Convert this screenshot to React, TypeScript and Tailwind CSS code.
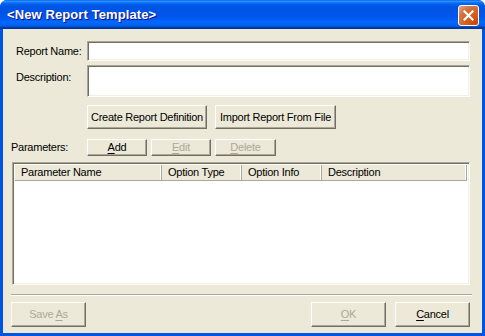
import React from "react";

const font = "font-['Liberation_Sans',Arial,sans-serif] text-[11px] tracking-[-0.25px]";

function Mn({ text, idx }: { text: string; idx: number }) {
  return (
    <span className="whitespace-pre">
      {text.slice(0, idx)}
      <span className="underline underline-offset-2">{text[idx]}</span>
      {text.slice(idx + 1)}
    </span>
  );
}

function Btn({
  children,
  className = "",
  disabled = false,
}: {
  children: React.ReactNode;
  className?: string;
  disabled?: boolean;
}) {
  return (
    <button
      className={
        "flex items-center justify-center bg-[#ECE9D8] border border-t-white border-l-white border-r-[#716F64] border-b-[#716F64] shadow-[inset_-1px_-1px_#ACA899] " +
        (disabled ? "text-[#ACA899] " : "text-black ") +
        className
      }
    >
      {children}
    </button>
  );
}

const sunken =
  "bg-white border border-t-[#ACA899] border-l-[#ACA899] border-r-white border-b-white shadow-[inset_1px_1px_#716F64,inset_-1px_-1px_#F1EFE2]";

export default function App() {
  return (
    <div className={"w-[485px] h-[336px] flex flex-col bg-[#0054E3] rounded-t-[7px] overflow-hidden select-none " + font}>
      {/* Title bar */}
      <div className="h-[29px] shrink-0 flex items-center justify-between pl-[7px] pr-[6px] bg-[linear-gradient(to_bottom,#0058EE_0%,#3593FF_4%,#288EFF_6%,#127DFF_8%,#036FFC_10%,#0262EE_14%,#0057E5_20%,#0054E3_24%,#0055EB_56%,#005BF5_66%,#026AFE_76%,#0062EF_86%,#0052D6_92%,#0040AB_94%,#003092_100%)]">
        <span className="text-white font-bold text-[13px] tracking-[0.1px] [text-shadow:1px_1px_#0F1089]">
          &lt;New Report Template&gt;
        </span>
        <div className="w-[21px] h-[21px] mt-[2px] rounded-[3px] border border-white bg-[radial-gradient(circle_at_90%_90%,#CC4600_0%,#DC6527_55%,#CD7546_70%,#E5A891_100%)] flex items-center justify-center">
          <svg width="11" height="11" viewBox="0 0 11 11">
            <path d="M1.5 1.5 L9.5 9.5 M9.5 1.5 L1.5 9.5" stroke="white" strokeWidth="2.2" strokeLinecap="square" />
          </svg>
        </div>
      </div>

      {/* Client area */}
      <div className="flex-1 mx-[3px] mb-[3px] bg-[#ECE9D8] flex flex-col pt-[12px]">
        <div className="flex items-center pr-[12px]">
          <span className="w-[84px] pl-[13px]">Report Name:</span>
          <div className={"flex-1 h-[20px] " + sunken} />
        </div>
        <div className="flex items-start pr-[12px] mt-[4px]">
          <span className="w-[84px] pl-[13px] pt-[4px]">Description:</span>
          <div className={"flex-1 h-[32px] " + sunken} />
        </div>
        <div className="flex pl-[84px] mt-[8px] gap-[8px]">
          <Btn className="w-[120px] h-[24px]">Create Report Definition</Btn>
          <Btn className="w-[121px] h-[24px]">Import Report From File</Btn>
        </div>
        <div className="flex items-center mt-[10px]">
          <span className="w-[84px] pl-[8px]">Parameters:</span>
          <div className="flex gap-[4px]">
            <Btn className="w-[60px] h-[17px]"><Mn text="Add" idx={0} /></Btn>
            <Btn className="w-[60px] h-[17px]" disabled><Mn text="Edit" idx={0} /></Btn>
            <Btn className="w-[61px] h-[17px]" disabled><Mn text="Delete" idx={0} /></Btn>
          </div>
        </div>

        {/* List view */}
        <div className={"ml-[9px] mr-[12px] mt-[6px] h-[123px] flex flex-col " + sunken}>
          <div className="h-[16px] mt-[2px] mx-[2px] flex bg-[#ECE9D8] border-b border-[#ACA899]">
            {[
              ["Parameter Name", "w-[147px]"],
              ["Option Type", "w-[80px]"],
              ["Option Info", "w-[80px]"],
              ["Description", "flex-1"],
            ].map(([t, w]) => (
              <div key={t} className={w + " flex items-center pl-[6px] border-r border-r-[#ACA899] shadow-[inset_-1px_0_white]"}>
                {t}
              </div>
            ))}
          </div>
        </div>

        <div className="ml-[8px] mr-[10px] mt-[9px] h-[2px] border-t border-t-[#ACA899] border-b border-b-white" />

        <div className="flex mt-[6px] pl-[8px] pr-[12px]">
          <Btn className="w-[75px] h-[25px]" disabled><Mn text="Save As" idx={5} /></Btn>
          <div className="flex-1" />
          <Btn className="w-[75px] h-[25px]" disabled><Mn text="OK" idx={0} /></Btn>
          <Btn className="w-[75px] h-[25px] ml-[9px]"><Mn text="Cancel" idx={0} /></Btn>
        </div>
      </div>
    </div>
  );
}
